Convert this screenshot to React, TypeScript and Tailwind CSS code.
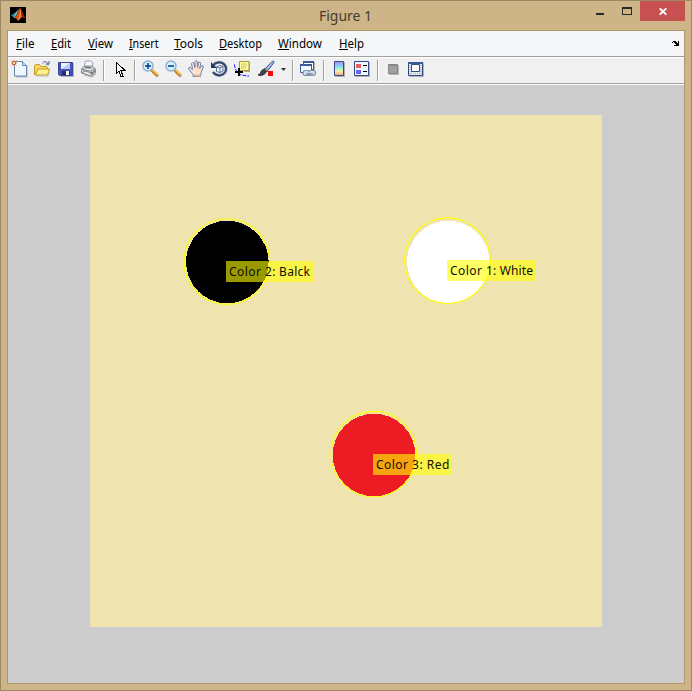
import React from "react";

const MENUS = [
  { label: "File", box: "w-[35px]", text: 18.5, line: 6 },
  { label: "Edit", box: "w-[37px]", text: 20, line: 6 },
  { label: "View", box: "w-[41px]", text: 25, line: 8 },
  { label: "Insert", box: "w-[45px]", text: 29.5, line: 4 },
  { label: "Tools", box: "w-[45px]", text: 29, line: 7 },
  { label: "Desktop", box: "w-[59px]", text: 43, line: 8 },
  { label: "Window", box: "w-[61px]", text: 44, line: 11 },
  { label: "Help", box: "w-[40px]", text: 25, line: 9 },
];

function Icon({ className = "", w = 18, children }: { className?: string; w?: number; children: React.ReactNode }) {
  return (
    <svg className={`block shrink-0 ${className}`} width={w} height="18" viewBox={`0 0 ${w} 18`} fill="none">
      {children}
    </svg>
  );
}

function Separator({ className = "" }: { className?: string }) {
  return <div className={`h-[21px] w-[2px] shrink-0 border-l border-r border-l-[#a0a0a0] border-r-white ${className}`} />;
}

function Magnifier({ plus }: { plus: boolean }) {
  return (
    <>
      <path d="M10 10.5 16 16.5" stroke="#aaa79f" strokeWidth="3" />
      <path d="M9.5 10 15.5 15.5" stroke="#c8781c" strokeWidth="3" />
      <path d="M10 9.5 15.5 14.7" stroke="#ffc344" strokeWidth="1.4" />
      <circle cx="6" cy="6" r="5" fill="#d3f3fc" stroke="#8caed6" strokeWidth="1.4" />
      <path d="M3 6h6" stroke="#173c85" strokeWidth="1.6" />
      {plus && <path d="M6 3v6" stroke="#173c85" strokeWidth="1.6" />}
    </>
  );
}

function Toolbar() {
  return (
    <div className="flex h-[25px] shrink-0 items-start bg-[#f0f0f0] pt-[2px]">
      {/* New figure */}
      <Icon className="ml-[3px]">
        <path d="M4.5 2.5h8l4 4v11h-12z" fill="#aeb6c4" />
        <path d="M3.5 1.5h8l4 4v10.500h-12z" fill="#f0f8ff" stroke="#6a85b0" />
        <path d="M11.500 1.500v4h4" fill="#c0daf5" stroke="#6688bb" />
        <path d="M0.500 0.500 5.500 5.500M5.500 0.500 0.500 5.500M3 0v6M0 3h6" stroke="#e58b67" />
        <circle cx="3" cy="3" r="1.700" fill="#ffe7a0" stroke="#cf5530" />
      </Icon>
      {/* Open */}
      <Icon className="ml-[5px]">
        <path d="M0.500 14.500V5.500l1-1h4l1.500 2h5.500l1 1v7z" fill="#f6d767" stroke="#c49a1e" />
        <path d="m1 15 3-6h11.500l-2 6z" fill="#fff28b" stroke="#c49a1e" />
        <path d="M8.500 3.500c1-2.500 4-2.500 5.500 0v2M11.500 4h3.500V1" stroke="#496a91" />
        <path d="M2 16h12l1.500-4" stroke="#bcb8ae" />
      </Icon>
      {/* Save */}
      <Icon className="ml-[6px]">
        <path d="M2 3h14v14H3z" fill="#b5b5bd" />
        <path d="M0.500 2.500h14v13h-13l-1-1z" fill="#4552b9" stroke="#3c469c" />
        <path d="M3 3h9v6H3z" fill="#edf4ff" />
        <path d="m3 9 9-6v6z" fill="#b6cdfa" />
        <path d="M4 11h8v4H4z" fill="#252b60" />
        <path d="M8 11h3v4H8z" fill="#f5f5fa" />
      </Icon>
      {/* Print */}
      <Icon className="ml-[4px]">
        <path d="m4 7 1.500-6h5l2.500 2-1.500 5z" fill="#f4f8ff" stroke="#9aa2b2" />
        <path d="m1.500 9 3-3h8l3 3v4l-4 3-10-3z" fill="#c4c6ca" stroke="#8b8f96" />
        <path d="m1 9 9 2 5-2M2 13l3-2 8 2.500-2 2.500z" fill="#ececec" stroke="#85898f" />
        <path d="m5 7 6 1M10 14l5-3" stroke="#555b65" />
        <path d="m4 15 8 2 4-3" stroke="#b3b3b3" />
      </Icon>
      <Separator className="ml-[5px]" />
      {/* Edit plot */}
      <Icon className="ml-[11px]" w={12}>
        <path d="M0.500 2.500v11l2.500-2.500 2 5.500h2L5 10.500h4z" fill="#fff" stroke="#000" shapeRendering="crispEdges" />
      </Icon>
      <Separator className="ml-[6px]" />
      {/* Zoom in and out */}
      <Icon className="ml-[6px]"><Magnifier plus /></Icon>
      <Icon className="ml-[5px]"><Magnifier plus={false} /></Icon>
      {/* Pan */}
      <Icon className="ml-[5px]">
        <path d="M5 16.500v-2L1 9.500 0.500 8l1.500-.5 2.500 2-1-6 1-1 1.500 1L7 7.500V1.500l1-1 1.300 1 .2 6 1-5 1.500-.5.700 1.500-1 5 2-3 1.500.5v1l-2.200 6-.500 3.500z" fill="#ffe2ca" stroke="#5877b4" strokeWidth=".9" />
        <path d="M6 15.500h6.500" stroke="#e2b699" strokeWidth="2" />
      </Icon>
      {/* Rotate 3D */}
      <Icon className="ml-[5px]">
        <path d="M2.500 5A7 6.500 0 1 1 2 12" stroke="#9eaabd" strokeWidth="3.200" />
        <path d="M2.500 5A7 6.500 0 1 1 2 12" stroke="#2d4068" strokeWidth="1.800" />
        <path d="M0 2v6h6z" fill="#253b67" />
        <path d="m5.500 7 3-1.500 3.500 1v4.500l-3 1.500-3.500-1zM5.500 7l3.500 1 3-1.500M9 8v4.500" fill="#edf5ff" stroke="#40577f" strokeWidth=".8" />
      </Icon>
      {/* Data cursor */}
      <Icon className="ml-[5px]">
        <path d="M6 2h10v10H7z" fill="#a9a997" />
        <path d="M5.500 1.500h9.500v9H5.500z" fill="#ffffa0" stroke="#a29b3c" />
        <path d="m6 11 5 0-4 3z" fill="#ffffa0" />
        <path d="M7 4h6M7 6h6M7 8h5" stroke="#b5ad5c" strokeWidth=".8" />
        <path d="M0 4c1 5 3 9 6 10.500 3 1 6 1.500 9 1.500" stroke="#2020ff" strokeDasharray="4 1" />
        <path d="M1 12h8M5 8v8" stroke="#000" strokeWidth="2" />
      </Icon>
      {/* Brush */}
      <Icon className="ml-[6px]">
        <path d="m7 9 7-7.500c1-1 2.500 0 2 1L9.500 11z" fill="#9eb9ed" stroke="#44588b" />
        <path d="m7 8 3 3-1 1-3-3z" fill="#d9d9d9" stroke="#666" />
        <path d="M0 15c3 0 2-4 5-5.500 2-.5 4 1.500 3 3C6 15 3 16 0 15z" fill="#44464b" stroke="#292b31" />
        <path d="M10 11h5v5h-5z" fill="#ff0808" />
      </Icon>
      <Icon className="ml-[4px]" w={6}><path d="M1 8h5L3.500 11z" fill="#303030" /></Icon>
      <Separator className="ml-[6px]" />
      {/* Link plot */}
      <Icon className="ml-[6px]">
        <path d="M4 2h11v9H4z" fill="#b4b4b4" />
        <path d="M3.500 1.500h10v8h-10z" fill="#fff" stroke="#3a5998" />
        <path d="M3 2h11" stroke="#3a5998" strokeWidth="2" />
        <path d="M.5 4.500h11v8H.5z" fill="#f4f8ff" stroke="#3a5998" />
        <path d="M0 5h12" stroke="#3a5998" strokeWidth="2" />
        <rect x="3" y="10.500" width="7" height="5" rx="2.400" fill="#dce7ec" stroke="#7b90a8" strokeWidth="1.200" />
        <rect x="8.500" y="10.500" width="7" height="5" rx="2.400" fill="#dce7ec" stroke="#7b90a8" strokeWidth="1.200" />
        <path d="M6 13h7" stroke="#c7d6e0" strokeWidth="2" />
        <path d="M6 14h7" stroke="#526985" />
      </Icon>
      <Separator className="ml-[5px]" />
      {/* Colorbar */}
      <Icon className="ml-[9px]" w={13}>
        <defs>
          <linearGradient id="colorbar" x2="0" y2="1">
            <stop stopColor="#b58be9" /><stop offset=".3" stopColor="#8bc8fa" />
            <stop offset=".5" stopColor="#a0f5d4" /><stop offset=".7" stopColor="#f7efa0" /><stop offset="1" stopColor="#ff9b8a" />
          </linearGradient>
        </defs>
        <path d="M1 2h10v15H1z" fill="#b4b4b4" />
        <path d="M0.500 1.500h9v14h-9z" fill="url(#colorbar)" stroke="#304b85" />
      </Icon>
      {/* Legend */}
      <Icon className="ml-[7px]">
        <path d="M1 2h15v15H1z" fill="#b4b4b4" />
        <path d="M0.500 1.500h14v14h-14z" fill="#f3f7ff" stroke="#304b85" />
        <path d="M2 4h5v4H2z" fill="#e66060" /><path d="M2 10h5v4H2z" fill="#6666e6" />
        <path d="M9 5.500h4M9 11.500h4" stroke="#000" />
      </Icon>
      <Separator className="ml-[5px]" />
      {/* Plot tool visibility */}
      <Icon className="ml-[9px]" w={13}>
        <path d="M1 5h10v10H1z" fill="#b8b8b8" />
        <path d="M0.500 4.500h9v9h-9z" fill="#a0a0a0" stroke="#858585" />
        <path d="M0 5.500h10" stroke="#888" />
      </Icon>
      <Icon className="ml-[7px]">
        <path d="M1 3h15v14H1z" fill="#b4b4b4" />
        <path d="M0.500 2.500h14v13h-14z" fill="#eef3f8" stroke="#304b85" />
        <path d="M0 3h15" stroke="#3a5998" strokeWidth="2" />
        <path d="M2 5v10M13 5v10M1 13.500h13" stroke="#b7bfc6" strokeWidth="2" strokeDasharray="1 1" />
        <path d="M3.500 4.500h8v7h-8z" fill="#fff" stroke="#304b85" />
      </Icon>
    </div>
  );
}

const SPOTS = [
  { fill: "#000", cx: 137.3, cy: 147, rx: 136.8, ry: 146.6, x: 136, y: 146, w: 87, tail: "2: Balck", tw: 45 },
  { fill: "#fff", cx: 358.3, cy: 147, rx: 357.5, ry: 145.7, x: 357, y: 145, w: 89, tail: "1: White", tw: 47 },
  { fill: "#ed1c24", cx: 284, cy: 340, rx: 283.8, ry: 339.2, x: 283, y: 339, w: 79, tail: "3: Red", tw: 37.5 },
];

function FigureImage() {
  return (
    <svg className="block bg-[#efe3af]" width="512" height="512" viewBox="0 0 512 512">
      {SPOTS.map((s) => (
        <g key={s.tail}>
          <circle cx={s.cx} cy={s.cy} r="41.300" fill={s.fill} shapeRendering="crispEdges" />
          <circle cx={s.rx} cy={s.ry} r="42.800" fill="none" stroke="#ffff00" strokeWidth="1.100" />
          <rect x={s.x} y={s.y} width={s.w} height="21" fill="#ffff00" fillOpacity=".6" />
          <text x={s.x + 3} y={s.y + 15} className="font-['Noto_Sans',sans-serif] text-[12px]" fill="#101000">
            <tspan textLength="32">Color</tspan>
            <tspan x={s.x + 39} textLength={s.tw}>{s.tail}</tspan>
          </text>
        </g>
      ))}
    </svg>
  );
}

export default function App() {
  return (
    <div className="flex h-[691px] w-[692px] flex-col overflow-hidden border border-[#9c8964] bg-[#cdb587] font-['Noto_Sans',sans-serif]">
      <div className="flex h-[29px] shrink-0 items-start">
        <svg className="ml-[9px] mt-[6px] block" width="16" height="16" viewBox="0 0 16 16">
          <path d="M0 0h16v16H0z" fill="#000" />
          <path d="m1 8 4-2 2 1-3 4z" fill="#387f9e" />
          <path d="m5 6 4-4-3 7-2 2z" fill="#6cb9ca" />
          <path d="M4 11c3-1 4-8 6-10 2 2 3 8 5 10-2-1-3-1-4 0l-3 3c-1-2-2-3-4-3z" fill="#d64a16" />
          <path d="M10 1c1 4-1 9-2 13 2-2 3-6 3-9z" fill="#ffb229" />
          <path d="M11 4c0 4 1 6 4 7l-2-5z" fill="#8d1712" />
        </svg>
        <svg className="ml-[289px] block overflow-visible" width="64" height="28">
          <text x="4" y="20" fontSize="15" fill="#443c2e" textLength="53" lengthAdjust="spacingAndGlyphs">Figure 1</text>
        </svg>
        <div className="ml-[217px] mt-[12px] h-[2px] w-[8px] bg-[#292929]" />
        <div className="ml-[18px] mt-[6px] h-[8px] w-[10px] border border-t-2 border-[#292929]" />
        <div className="ml-[8px] flex h-[20px] w-[45px] items-center justify-center bg-[#c75050]">
          <svg width="8" height="7" viewBox="0 0 8 7"><path d="m.7.3 6.600 6.400M7.300.3.7 6.700" stroke="#fff" strokeWidth="1.800" /></svg>
        </div>
      </div>

      <div className="ml-[6px] flex h-[654px] w-[678px] shrink-0 flex-col border border-[#ae986e] bg-[#cccccc]">
        <div className="flex h-[25px] shrink-0 bg-[#f5f6f7] pl-[8px]">
          {MENUS.map((m) => (
            <svg key={m.label} className={`block h-[25px] shrink-0 ${m.box}`}>
              <text x="0" y="17" fontSize="12" fill="#000" textLength={m.text} lengthAdjust="spacingAndGlyphs">{m.label}</text>
              <rect x="0" y="18" width={m.line} height="1" fill="#000" />
            </svg>
          ))}
          <svg className="ml-auto mr-[4px] mt-[10px] block" width="8" height="6" shapeRendering="crispEdges">
            <path d="M0 1h1V0h3v1h1v1h1V0h1v5H2V4h2V3H3V2H2V1H1v1H0z" fill="#000" />
          </svg>
        </div>
        <div className="h-[2px] shrink-0 border-b border-t border-b-white border-t-[#a0a0a0]" />
        <Toolbar />
        <div className="h-[2px] shrink-0 border-b border-t border-b-white border-t-[#a0a0a0]" />
        <div className="flex flex-1 pl-[82px] pt-[30px]">
          <FigureImage />
        </div>
      </div>
    </div>
  );
}
